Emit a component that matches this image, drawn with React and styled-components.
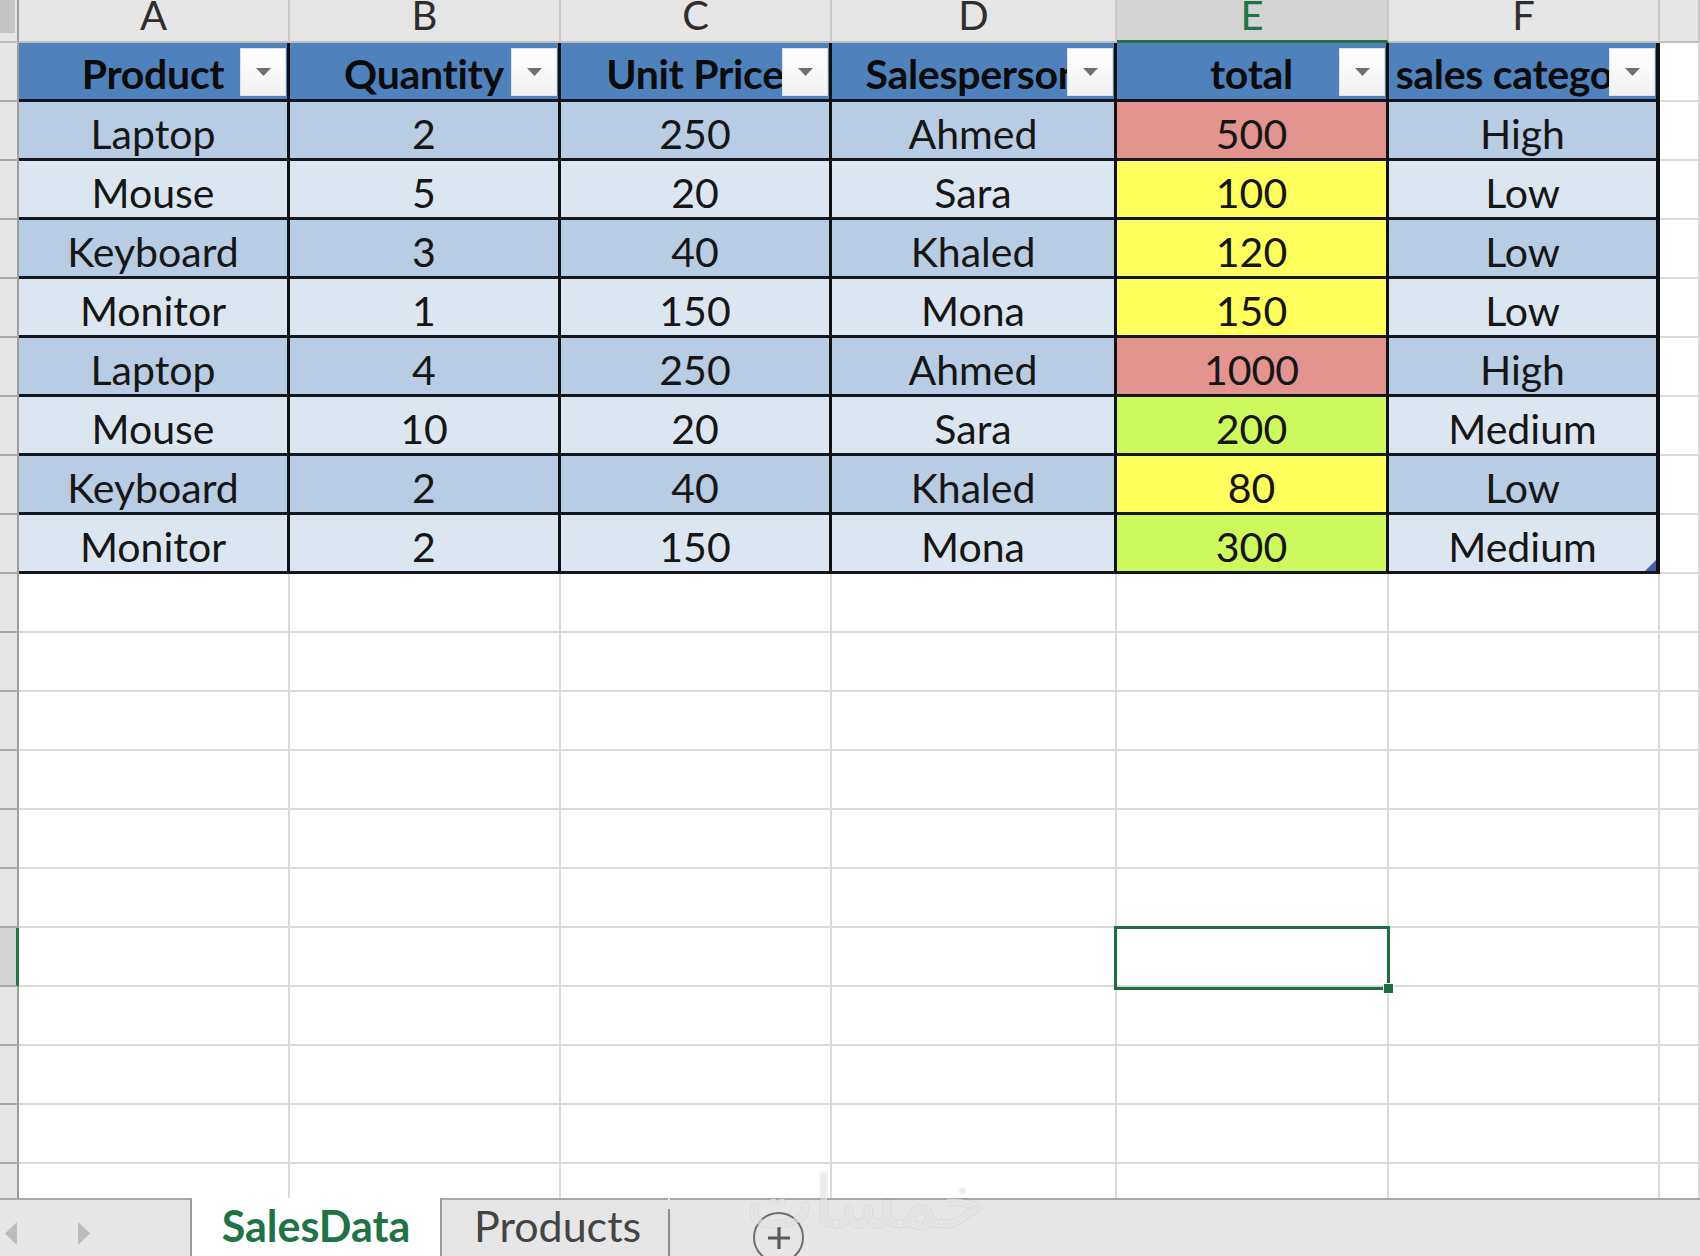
import React from "react";
import styled, { createGlobalStyle } from "styled-components";

const GlobalStyle = createGlobalStyle`
  html, body { margin: 0; padding: 0; background: #fff; }
  body { font-family: Lato, "Liberation Sans", sans-serif; }
`;

const COLS = [271, 271, 271, 285, 272, 271];
const LETTERS = ["A", "B", "C", "D", "E", "F"];
const HEADERS = ["Product", "Quantity", "Unit Price", "Salesperson", "total", "sales category"];
const DATA = [
  ["Laptop", 2, 250, "Ahmed", 500, "High"],
  ["Mouse", 5, 20, "Sara", 100, "Low"],
  ["Keyboard", 3, 40, "Khaled", 120, "Low"],
  ["Monitor", 1, 150, "Mona", 150, "Low"],
  ["Laptop", 4, 250, "Ahmed", 1000, "High"],
  ["Mouse", 10, 20, "Sara", 200, "Medium"],
  ["Keyboard", 2, 40, "Khaled", 80, "Low"],
  ["Monitor", 2, 150, "Mona", 300, "Medium"],
];
const SEL_COL = 4;
const SEL_ROW = 15;
const TOTAL_ROWS = 21;

const BAND_DARK = "#b8cce4";
const BAND_LIGHT = "#dce6f1";
const RED = "#e4948f";
const YELLOW = "#ffff5e";
const GREEN = "#cdf95f";

const totalColor = (t) => (t >= 500 ? RED : t >= 200 ? GREEN : YELLOW);

const Page = styled.div`
  position: relative;
  width: 1700px;
  height: 1256px;
  overflow: hidden;
  display: flex;
  flex-direction: column;
  background: #fff;
`;

const Sheet = styled.div`
  height: 1198px;
  flex-shrink: 0;
  overflow: hidden;
  display: grid;
  grid-template-columns: 19px ${COLS.map((w) => `${w}px`).join(" ")} 1fr;
  grid-template-rows: 43px;
  grid-auto-rows: 59px;
`;

const Corner = styled.div`
  box-sizing: border-box;
  background: linear-gradient(#c4c4c4, #c4c4c4) no-repeat 0 0 / 15px 33px, #e6e6e6;
  border-right: 2px solid #9e9e9e;
  border-bottom: 2px solid #bdbdbd;
`;

const ColHead = styled.div`
  box-sizing: border-box;
  display: flex;
  justify-content: center;
  align-items: flex-start;
  overflow: hidden;
  background: ${(p) => (p.$sel ? "#d3d3d3" : "#e6e6e6")};
  border-right: 2px solid #c8c8c8;
  border-bottom: ${(p) => (p.$sel ? "3px solid #217346" : "2px solid #bdbdbd")};
  color: ${(p) => (p.$sel ? "#217346" : "#2e2e2e")};
  font-size: 40px;
  line-height: 40px;
`;

const Letter = styled.span`
  margin-top: -5px;
`;

const RowHead = styled.div`
  box-sizing: border-box;
  background: ${(p) => (p.$sel ? "#d3d3d3" : "#e6e6e6")};
  border-right: ${(p) => (p.$sel ? "3px solid #217346" : "2px solid #9e9e9e")};
  border-bottom: 2px solid #a9a9a9;
`;

const HeadCell = styled.div`
  box-sizing: border-box;
  position: relative;
  overflow: hidden;
  display: flex;
  justify-content: center;
  align-items: center;
  padding-top: 5px;
  background: #4f81bd;
  border-right: ${(p) => (p.$last ? "4px" : "3px")} solid #111;
  border-bottom: 3px solid #14171f;
  white-space: nowrap;
  font-size: 41px;
  line-height: 1.2;
  font-weight: 700;
  letter-spacing: -0.3px;
  color: #0b0b0b;
`;

const FilterButton = styled.div`
  position: absolute;
  top: 5px;
  right: 1px;
  width: 46px;
  height: 48px;
  box-sizing: border-box;
  display: flex;
  align-items: center;
  justify-content: center;
  background: linear-gradient(#ffffff, #f1f1f1);
  border: 1px solid #e2e2e2;
`;

const DataCell = styled.div`
  box-sizing: border-box;
  position: relative;
  overflow: hidden;
  display: flex;
  justify-content: center;
  align-items: center;
  padding-top: 8px;
  background: ${(p) => p.$bg};
  border-right: ${(p) => (p.$last ? "4px" : "3px")} solid #111;
  border-bottom: 3px solid #14171f;
  white-space: nowrap;
  font-size: 41px;
  line-height: 1.2;
  color: #161616;
`;

const ResizeHandle = styled.div`
  position: absolute;
  right: 0;
  bottom: 0;
  width: 11px;
  height: 11px;
  background: #4b5db0;
  clip-path: polygon(100% 0, 100% 100%, 0 100%);
`;

const GridCell = styled.div`
  box-sizing: border-box;
  position: relative;
  z-index: ${(p) => (p.$sel ? 2 : "auto")};
  background: #fff;
  border-right: 2px solid #dadada;
  border-bottom: 2px solid #dadada;
`;

const Selection = styled.div`
  position: absolute;
  left: -3px;
  top: -2px;
  right: -3px;
  bottom: -5px;
  border: 3px solid #1f6e43;
`;

const FillHandle = styled.div`
  position: absolute;
  right: -7px;
  bottom: -7px;
  width: 9px;
  height: 9px;
  background: #1f6e43;
  border: 1px solid #fff;
`;

const TabBar = styled.div`
  height: 58px;
  flex-shrink: 0;
  display: flex;
  background: #e6e6e6;
`;

const NavArea = styled.div`
  width: 192px;
  box-sizing: border-box;
  display: flex;
  align-items: flex-start;
  gap: 59px;
  padding: 22px 0 0 5px;
  border-top: 2px solid #a8a8a8;
  border-right: 2px solid #9a9a9a;
`;

const SheetTab = styled.div`
  box-sizing: border-box;
  display: flex;
  justify-content: ${(p) => (p.$active ? "center" : "flex-start")};
  align-items: flex-start;
  width: ${(p) => (p.$active ? "250px" : "226px")};
  padding: ${(p) => (p.$active ? "6px 0 0 0" : "4px 0 0 32px")};
  background: ${(p) => (p.$active ? "#fff" : "#e6e6e6")};
  border-top: ${(p) => (p.$active ? "none" : "2px solid #a8a8a8")};
  border-right: ${(p) => (p.$active ? "2px solid #9a9a9a" : "none")};
  font-size: 43px;
  line-height: 1;
  font-weight: ${(p) => (p.$active ? 700 : 400)};
  color: ${(p) => (p.$active ? "#217346" : "#444")};
  white-space: nowrap;
`;

const TabDivider = styled.div`
  width: 2px;
  height: 47px;
  align-self: flex-end;
  background: #8c8c8c;
`;

const TabFiller = styled.div`
  flex: 1;
  display: flex;
  align-items: flex-start;
  padding: 12px 0 0 83px;
  border-top: 2px solid #a8a8a8;
`;

const AddSheet = styled.div`
  width: 51px;
  height: 51px;
  flex-shrink: 0;
  box-sizing: border-box;
  border: 2px solid #6e6e6e;
  border-radius: 50%;
  display: flex;
  align-items: center;
  justify-content: center;
`;

const Watermark = styled.div`
  position: absolute;
  left: 746px;
  top: 1166px;
  font-family: "DejaVu Sans", "Noto Sans", sans-serif;
  font-size: 72px;
  line-height: 1;
  color: rgba(252, 252, 252, 0.6);
  text-shadow: 0 0 2px rgba(0, 0, 0, 0.18);
  pointer-events: none;
`;

const NavArrow = ({ dir }) => (
  <svg width="13" height="23" viewBox="0 0 13 23">
    <polygon
      points={dir === "left" ? "12,0 0,11.5 12,23" : "1,0 13,11.5 1,23"}
      fill="#bcbcbc"
    />
  </svg>
);

const DropTriangle = () => (
  <svg width="15" height="8" viewBox="0 0 15 8">
    <polygon points="0,0 15,0 7.5,8" fill="#6f6f6f" />
  </svg>
);

const PlusIcon = () => (
  <svg width="26" height="26" viewBox="0 0 26 26">
    <path d="M13 2 V24 M2 13 H24" stroke="#5a5a5a" strokeWidth="3.2" fill="none" />
  </svg>
);

export default function App() {
  const rows = [];
  for (let r = 0; r < TOTAL_ROWS; r++) {
    const cells = [<RowHead key="rh" $sel={r === SEL_ROW} />];
    if (r === 0) {
      HEADERS.forEach((h, c) => {
        cells.push(
          <HeadCell key={c} $last={c === 5}>
            {h}
            <FilterButton>
              <DropTriangle />
            </FilterButton>
          </HeadCell>
        );
      });
      cells.push(<GridCell key="g" />);
    } else if (r <= DATA.length) {
      const row = DATA[r - 1];
      const band = r % 2 === 1 ? BAND_DARK : BAND_LIGHT;
      row.forEach((v, c) => {
        cells.push(
          <DataCell key={c} $bg={c === 4 ? totalColor(v) : band} $last={c === 5}>
            {v}
            {c === 5 && r === DATA.length && <ResizeHandle />}
          </DataCell>
        );
      });
      cells.push(<GridCell key="g" />);
    } else {
      for (let c = 0; c < 7; c++) {
        const sel = r === SEL_ROW && c === SEL_COL;
        cells.push(
          <GridCell key={c} $sel={sel}>
            {sel && (
              <Selection>
                <FillHandle />
              </Selection>
            )}
          </GridCell>
        );
      }
    }
    rows.push(<React.Fragment key={r}>{cells}</React.Fragment>);
  }

  return (
    <>
      <GlobalStyle />
      <Page>
        <Sheet>
          <Corner />
          {LETTERS.map((l, i) => (
            <ColHead key={l} $sel={i === SEL_COL}>
              <Letter>{l}</Letter>
            </ColHead>
          ))}
          <ColHead />
          {rows}
        </Sheet>
        <TabBar>
          <NavArea>
            <NavArrow dir="left" />
            <NavArrow dir="right" />
          </NavArea>
          <SheetTab $active>SalesData</SheetTab>
          <SheetTab>Products</SheetTab>
          <TabDivider />
          <TabFiller>
            <AddSheet>
              <PlusIcon />
            </AddSheet>
          </TabFiller>
        </TabBar>
        <Watermark>خمسات</Watermark>
      </Page>
    </>
  );
}
